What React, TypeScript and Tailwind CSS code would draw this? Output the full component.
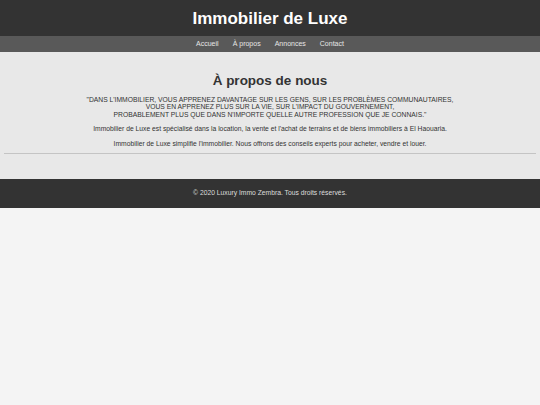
import React from "react";

export default function App() {
  const font = { fontFamily: '"Liberation Sans", Arial, sans-serif' };
  return (
    <div className="min-h-[405px] bg-[#f4f4f4]" style={font}>
      <header className="h-[36px] bg-[#333333] flex items-center justify-center">
        <h1 className="text-[17px] font-bold text-white leading-none">Immobilier de Luxe</h1>
      </header>
      <nav className="h-[16px] bg-[#595959] flex items-center justify-center gap-[14px] text-[7px] text-[#e6e6e6]">
        <a>Accueil</a>
        <a>À propos</a>
        <a>Annonces</a>
        <a>Contact</a>
      </nav>
      <main className="h-[127px] bg-[#e8e8e8] px-[4px] pt-[22px] text-[#333333] text-center">
        <h2 className="text-[13.5px] font-bold leading-none mb-[8px]">À propos de nous</h2>
        <p className="text-[6.75px] leading-[7.5px] uppercase">
          "Dans l'immobilier, vous apprenez davantage sur les gens, sur les problèmes communautaires,
          <br />
          vous en apprenez plus sur la vie, sur l'impact du gouvernement,
          <br />
          probablement plus que dans n'importe quelle autre profession que je connais."
        </p>
        <p className="text-[6.75px] leading-[8px] mt-[7px]">
          Immobilier de Luxe est spécialisé dans la location, la vente et l'achat de terrains et de biens immobiliers à El Haouaria.
        </p>
        <p className="text-[6.75px] leading-[8px] mt-[7px]">
          Immobilier de Luxe simplifie l'immobilier. Nous offrons des conseils experts pour acheter, vendre et louer.
        </p>
        <hr className="mt-[5px] border-t border-[#c4c4c4]" />
      </main>
      <footer className="h-[29px] bg-[#333333] flex items-center justify-center text-[6.75px] text-[#dddddd]">
        © 2020 Luxury Immo Zembra. Tous droits réservés.
      </footer>
    </div>
  );
}
